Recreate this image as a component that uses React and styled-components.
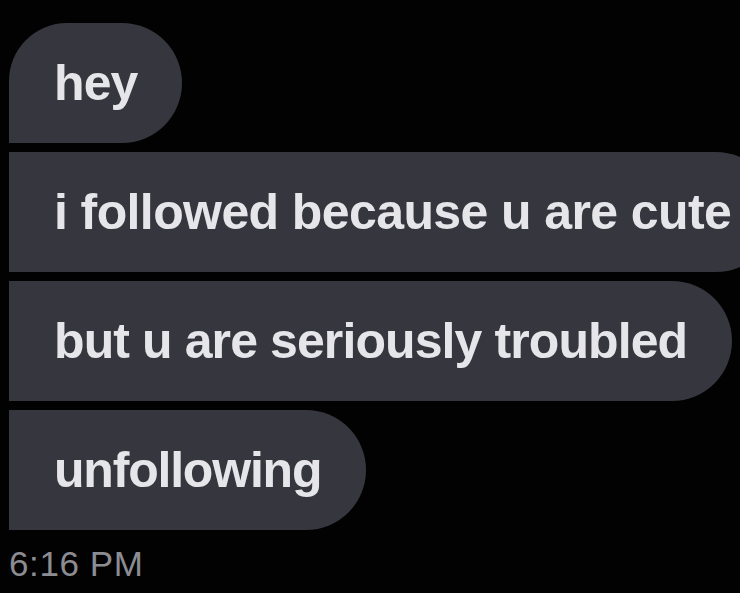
import React from 'react'
import styled, { createGlobalStyle } from 'styled-components'

const Global = createGlobalStyle`
  html, body {
    margin: 0;
    padding: 0;
    background: #020203;
    overflow: hidden;
  }
`

const Thread = styled.div`
  width: 740px;
  height: 593px;
  box-sizing: border-box;
  padding: 23px 0 0 9px;
  display: flex;
  flex-direction: column;
  align-items: flex-start;
  gap: 9px;
  overflow: hidden;
  background: #020203;
  font-family: 'Liberation Sans', Arial, sans-serif;
`

const Bubble = styled.div`
  height: 120px;
  box-sizing: border-box;
  padding: 0 45px 0 45px;
  display: flex;
  align-items: center;
  flex-shrink: 0;
  white-space: nowrap;
  background: #36373e;
  color: #e6e6ea;
  font-size: 50px;
  font-weight: 700;
  letter-spacing: ${p => p.$spacing || '-0.9px'};
  border-radius: ${p => (p.$first ? '58px' : '0')} 60px 60px 0;
`

const Time = styled.div`
  margin-top: 5px;
  color: #8c8d92;
  font-size: 35px;
  font-weight: 400;
  letter-spacing: 0.6px;
`

const messages = [
  { text: 'hey' },
  { text: 'i followed because u are cute', spacing: '-0.6px' },
  { text: 'but u are seriously troubled' },
  { text: 'unfollowing', spacing: '-1.2px' },
]

export default function App() {
  return (
    <>
      <Global />
      <Thread>
        {messages.map((m, i) => (
          <Bubble key={i} $first={i === 0} $spacing={m.spacing}>
            {m.text}
          </Bubble>
        ))}
        <Time>6:16 PM</Time>
      </Thread>
    </>
  )
}
